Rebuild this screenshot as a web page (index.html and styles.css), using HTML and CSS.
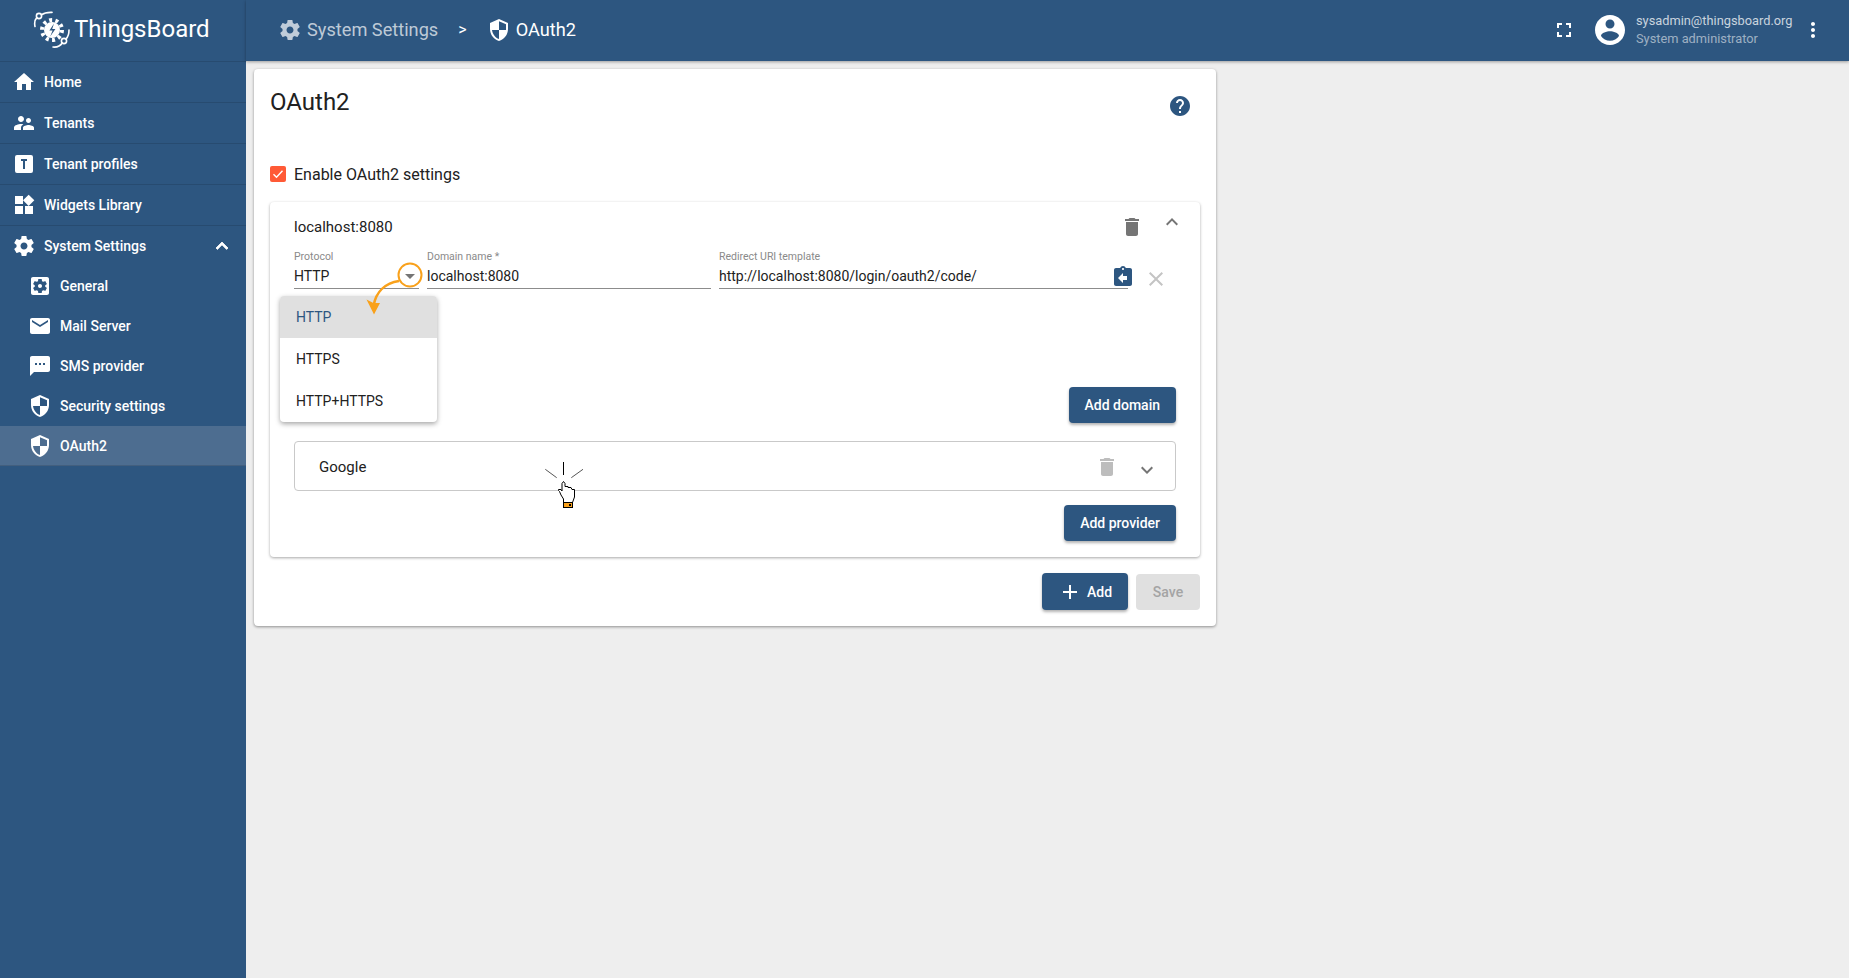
FILE: index.html
```html
<!DOCTYPE html>
<html lang="en">
<head>
<meta charset="utf-8">
<title>OAuth2 - ThingsBoard</title>
<link rel="stylesheet" href="styles.css">
</head>
<body>
<svg class="defs" width="0" height="0" aria-hidden="true">
  <symbol id="i-home" viewBox="0 0 24 24"><path d="M10 20v-6h4v6h5v-8h3L12 3 2 12h3v8z"/></symbol>
  <symbol id="i-tenants" viewBox="0 0 24 24"><path d="M16.5 12c1.38 0 2.49-1.12 2.49-2.5S17.88 7 16.5 7C15.12 7 14 8.12 14 9.5s1.12 2.5 2.5 2.5zM9 11c1.66 0 2.99-1.34 2.99-3S10.66 5 9 5C7.34 5 6 6.34 6 8s1.34 3 3 3zm7.5 3c-1.83 0-5.5.92-5.5 2.75V19h11v-2.25c0-1.83-3.67-2.75-5.5-2.75zM9 13c-2.33 0-7 1.17-7 3.5V19h7v-2.25c0-.85.33-2.34 2.37-3.47C10.5 13.1 9.66 13 9 13z"/></symbol>
  <symbol id="i-tbox" viewBox="0 0 24 24"><path d="M9,7V9H11V17H13V9H15V7H9M5,3H19A2,2 0 0,1 21,5V19A2,2 0 0,1 19,21H5A2,2 0 0,1 3,19V5A2,2 0 0,1 5,3Z"/></symbol>
  <symbol id="i-widgets" viewBox="0 0 24 24"><path d="M13 13v8h8v-8h-8zM3 21h8v-8H3v8zM3 3v8h8V3H3zm13.66-1.31L11 7.34 16.66 13l5.66-5.66-5.66-5.65z"/></symbol>
  <symbol id="i-gear" viewBox="0 0 24 24"><path d="M19.43 12.98c.04-.32.07-.64.07-.98s-.03-.66-.07-.98l2.11-1.65c.19-.15.24-.42.12-.64l-2-3.46c-.12-.22-.39-.3-.61-.22l-2.49 1c-.52-.4-1.08-.73-1.69-.98l-.38-2.65C14.46 2.18 14.25 2 14 2h-4c-.25 0-.46.18-.49.42l-.38 2.65c-.61.25-1.17.59-1.69.98l-2.49-1c-.23-.09-.49 0-.61.22l-2 3.46c-.13.22-.07.49.12.64l2.11 1.65c-.04.32-.07.65-.07.98s.03.66.07.98l-2.11 1.65c-.19.15-.24.42-.12.64l2 3.46c.12.22.39.3.61.22l2.49-1c.52.4 1.08.73 1.69.98l.38 2.65c.03.24.24.42.49.42h4c.25 0 .46-.18.49-.42l.38-2.65c.61-.25 1.17-.59 1.69-.98l2.49 1c.23.09.49 0 .61-.22l2-3.46c.12-.22.07-.49-.12-.64l-2.11-1.65zM12 15.5c-1.93 0-3.5-1.57-3.5-3.5s1.57-3.5 3.5-3.5 3.5 1.57 3.5 3.5-1.57 3.5-3.5 3.5z"/></symbol>
  <symbol id="i-gearbox" viewBox="0 0 24 24"><path d="M12 10c-1.1 0-2 .9-2 2s.9 2 2 2 2-.9 2-2-.9-2-2-2zm7-7H5c-1.11 0-2 .9-2 2v14c0 1.1.89 2 2 2h14c1.11 0 2-.9 2-2V5c0-1.1-.89-2-2-2zm-1.75 9c0 .23-.02.46-.05.68l1.48 1.16c.13.11.17.3.08.45l-1.4 2.42c-.09.15-.27.21-.43.15l-1.74-.7c-.36.28-.76.51-1.18.69l-.26 1.85c-.03.17-.18.3-.35.3h-2.8c-.17 0-.32-.13-.35-.29l-.26-1.85c-.43-.18-.82-.41-1.18-.69l-1.74.7c-.16.06-.34 0-.43-.15l-1.4-2.42c-.09-.15-.05-.34.08-.45l1.48-1.16c-.03-.23-.05-.46-.05-.69 0-.23.02-.46.05-.68l-1.48-1.16c-.13-.11-.17-.3-.08-.45l1.4-2.42c.09-.15.27-.21.43-.15l1.74.7c.36-.28.76-.51 1.18-.69l.26-1.85c.03-.17.18-.3.35-.3h2.8c.17 0 .32.13.35.29l.26 1.85c.43.18.82.41 1.18.69l1.74-.7c.16-.06.34 0 .43.15l1.4 2.42c.09.15.05.34-.08.45l-1.48 1.16c.03.23.05.46.05.69z"/></symbol>
  <symbol id="i-mail" viewBox="0 0 24 24"><path d="M20 4H4c-1.1 0-1.99.9-1.99 2L2 18c0 1.1.9 2 2 2h16c1.1 0 2-.9 2-2V6c0-1.1-.9-2-2-2zm0 4l-8 5-8-5V6l8 5 8-5v2z"/></symbol>
  <symbol id="i-sms" viewBox="0 0 24 24"><path d="M20 2H4c-1.1 0-1.99.9-1.99 2L2 22l4-4h14c1.1 0 2-.9 2-2V4c0-1.1-.9-2-2-2zM9 11H7V9h2v2zm4 0h-2V9h2v2zm4 0h-2V9h2v2z"/></symbol>
  <symbol id="i-shield" viewBox="0 0 24 24"><path transform="matrix(-1 0 0 1 24 0)" d="M12 1L3 5v6c0 5.55 3.84 10.74 9 12 5.16-1.26 9-6.45 9-12V5l-9-4zm0 10.99h7c-.53 4.12-3.28 7.79-7 8.94V12H5V6.3l7-3.11v8.8z"/></symbol>
  <symbol id="i-less" viewBox="0 0 24 24"><path d="M12 8l-6 6 1.41 1.41L12 10.83l4.59 4.58L18 14z"/></symbol>
  <symbol id="i-more" viewBox="0 0 24 24"><path d="M16.59 8.59L12 13.17 7.41 8.59 6 10l6 6 6-6z"/></symbol>
  <symbol id="i-delete" viewBox="0 0 24 24"><path d="M6 19c0 1.1.9 2 2 2h8c1.1 0 2-.9 2-2V7H6v12zM19 4h-3.5l-1-1h-5l-1 1H5v2h14V4z"/></symbol>
  <symbol id="i-help" viewBox="0 0 24 24"><path d="M12 2C6.48 2 2 6.48 2 12s4.48 10 10 10 10-4.48 10-10S17.52 2 12 2zm1 17h-2v-2h2v2zm2.07-7.75l-.9.92C13.45 12.9 13 13.5 13 15h-2v-.5c0-1.1.45-2.1 1.17-2.83l1.24-1.26c.37-.36.59-.86.59-1.41 0-1.1-.9-2-2-2s-2 .9-2 2H8c0-2.21 1.79-4 4-4s4 1.79 4 4c0 .88-.36 1.68-.93 2.25z"/></symbol>
  <symbol id="i-close" viewBox="0 0 24 24"><path d="M19 6.41L17.59 5 12 10.59 6.41 5 5 6.41 10.59 12 5 17.59 6.41 19 12 13.41 17.59 19 19 17.59 13.41 12z"/></symbol>
  <symbol id="i-add" viewBox="0 0 24 24"><path d="M19 13h-6v6h-2v-6H5v-2h6V5h2v6h6v2z"/></symbol>
  <symbol id="i-full" viewBox="0 0 24 24"><path d="M7 14H5v5h5v-2H7v-3zm-2-4h2V7h3V5H5v5zm12 7h-3v2h5v-5h-2v3zM14 5v2h3v3h2V5h-5z"/></symbol>
  <symbol id="i-account" viewBox="0 0 24 24"><path d="M12 2C6.48 2 2 6.48 2 12s4.48 10 10 10 10-4.48 10-10S17.52 2 12 2zm0 3c1.66 0 3 1.34 3 3s-1.34 3-3 3-3-1.34-3-3 1.34-3 3-3zm0 14.2c-2.5 0-4.71-1.28-6-3.22.03-1.99 4-3.08 6-3.08 1.99 0 5.97 1.09 6 3.08-1.29 1.94-3.5 3.22-6 3.22z"/></symbol>
  <symbol id="i-vert" viewBox="0 0 24 24"><path d="M12 8c1.1 0 2-.9 2-2s-.9-2-2-2-2 .9-2 2 .9 2 2 2zm0 2c-1.1 0-2 .9-2 2s.9 2 2 2 2-.9 2-2-.9-2-2-2zm0 6c-1.1 0-2 .9-2 2s.9 2 2 2 2-.9 2-2-.9-2-2-2z"/></symbol>
  <symbol id="i-return" viewBox="0 0 24 24"><path d="M19 3h-4.18C14.4 1.84 13.3 1 12 1c-1.3 0-2.4.84-2.82 2H5c-1.1 0-2 .9-2 2v14c0 1.1.9 2 2 2h14c1.1 0 2-.9 2-2V5c0-1.1-.9-2-2-2zm-7 0c.55 0 1 .45 1 1s-.45 1-1 1-1-.45-1-1 .45-1 1-1zm4 12h-4v3l-5-5 5-5v3h4v4z"/></symbol>
</svg>

<div class="app">
  <aside class="sidebar">
    <div class="brand">
      <svg class="logo" viewBox="0 0 38 38" width="38" height="38">
        <g fill="none" stroke="#fff" stroke-width="1.6" stroke-linecap="round">
          <circle cx="6" cy="5" r="2.6"/>
          <path d="M2 15.5C1.2 11.5 2 8.5 3.8 6.6M8.4 3.8C11 2 14 1.2 19 1.4"/>
          <circle cx="31" cy="30" r="2.6"/>
          <path d="M20 36C24 36.4 27 35.5 29.2 32M33 28C35.4 25.5 36 23 36 19"/>
        </g>
        <circle cx="19" cy="19" r="8" fill="#fff"/>
        <circle cx="19" cy="19" r="10" fill="none" stroke="#fff" stroke-width="4" stroke-dasharray="3 3.28"/>
        <path d="M21 12.5l-4.6 7h3.2l-2.4 6 5.2-7.6h-3.2z" fill="#2d5680"/>
      </svg>
      <span class="brand-name">ThingsBoard</span>
    </div>
    <nav class="nav">
      <a class="nav-item"><svg class="ic"><use href="#i-home"/></svg><span>Home</span></a>
      <a class="nav-item"><svg class="ic"><use href="#i-tenants"/></svg><span>Tenants</span></a>
      <a class="nav-item"><svg class="ic"><use href="#i-tbox"/></svg><span>Tenant profiles</span></a>
      <a class="nav-item"><svg class="ic"><use href="#i-widgets"/></svg><span>Widgets Library</span></a>
      <a class="nav-item nav-open"><svg class="ic"><use href="#i-gear"/></svg><span>System Settings</span><svg class="ic nav-chev"><use href="#i-less"/></svg></a>
      <div class="subnav">
        <a class="sub-item"><svg class="ic"><use href="#i-gearbox"/></svg><span>General</span></a>
        <a class="sub-item"><svg class="ic"><use href="#i-mail"/></svg><span>Mail Server</span></a>
        <a class="sub-item"><svg class="ic"><use href="#i-sms"/></svg><span>SMS provider</span></a>
        <a class="sub-item"><svg class="ic"><use href="#i-shield"/></svg><span>Security settings</span></a>
        <a class="sub-item sub-active"><svg class="ic"><use href="#i-shield"/></svg><span>OAuth2</span></a>
      </div>
    </nav>
  </aside>

  <div class="main">
    <header class="topbar">
      <div class="crumbs">
        <svg class="ic crumb-ic-dim"><use href="#i-gear"/></svg>
        <span class="crumb-dim">System Settings</span>
        <span class="crumb-sep">&gt;</span>
        <svg class="ic crumb-ic"><use href="#i-shield"/></svg>
        <span class="crumb-cur">OAuth2</span>
      </div>
      <div class="top-actions">
        <svg class="ic top-full"><use href="#i-full"/></svg>
        <svg class="avatar"><use href="#i-account"/></svg>
        <div class="user">
          <div class="user-mail">sysadmin@thingsboard.org</div>
          <div class="user-role">System administrator</div>
        </div>
        <svg class="ic top-more"><use href="#i-vert"/></svg>
      </div>
    </header>

    <main class="content">
      <section class="card">
        <div class="card-head">
          <h1 class="title">OAuth2</h1>
          <svg class="ic help"><use href="#i-help"/></svg>
        </div>
        <label class="check-row">
          <span class="checkbox"><svg viewBox="0 0 16 16" width="16" height="16"><path d="M3.5 8.2l3 3 6-6.4" fill="none" stroke="#fff" stroke-width="1.4"/></svg></span>
          <span>Enable OAuth2 settings</span>
        </label>

        <div class="panel">
          <div class="panel-head">
            <span class="panel-title">localhost:8080</span>
            <svg class="ic grey panel-del"><use href="#i-delete"/></svg>
            <svg class="ic grey panel-chev"><use href="#i-less"/></svg>
          </div>
          <div class="fields">
            <div class="field f-protocol">
              <div class="f-label">Protocol</div>
              <div class="f-value">HTTP<span class="caret"></span></div>
            </div>
            <div class="field f-domain">
              <div class="f-label">Domain name *</div>
              <div class="f-value">localhost:8080</div>
            </div>
            <div class="field f-uri">
              <div class="f-label">Redirect URI template</div>
              <div class="f-value">http://localhost:8080/login/oauth2/code/<svg class="ic f-copy"><use href="#i-return"/></svg></div>
            </div>
            <svg class="ic f-close"><use href="#i-close"/></svg>
          </div>
          <div class="btn-row btn-row-domain"><button class="btn">Add domain</button></div>
          <div class="provider">
            <span class="provider-name">Google</span>
            <svg class="ic light provider-del"><use href="#i-delete"/></svg>
            <svg class="ic grey provider-chev"><use href="#i-more"/></svg>
          </div>
          <div class="btn-row btn-row-provider"><button class="btn">Add provider</button></div>
        </div>

        <div class="actions">
          <button class="btn btn-add"><svg class="ic"><use href="#i-add"/></svg>Add</button>
          <button class="btn btn-off">Save</button>
        </div>
      </section>
    </main>
  </div>
</div>

<div class="menu">
  <div class="menu-item menu-sel">HTTP</div>
  <div class="menu-item">HTTPS</div>
  <div class="menu-item">HTTP+HTTPS</div>
</div>

<svg class="note" viewBox="360 258 70 60" width="70" height="60">
  <circle cx="410" cy="275" r="11.5" fill="none" stroke="#f9a11b" stroke-width="2"/>
  <path d="M399 281C386 283 376 291 373.5 306" fill="none" stroke="#f9a11b" stroke-width="2.6"/>
  <path d="M366.5 299.5L373.4 303 380 303L374 314.5z" fill="#f9a11b"/>
</svg>

<svg class="pointer" viewBox="540 458 50 55" width="50" height="55">
  <path d="M563.5 462V475" stroke="#000" fill="none"/>
  <path d="M545.3 469.3L556.7 477.7M583 469.3L571.3 477.7" stroke="#555" fill="none"/>
  <path d="M563.5 502.5V499L561 495L559.5 491.5L558.5 490.5V489.5H561L562 491V483.5L563.5 481.5L565 483.5V486.5H568V487.5H571L572 489.5H574.5V497L572.5 502.5Z" fill="#fff" stroke="#000"/>
  <rect x="563.5" y="502.5" width="9" height="5" fill="#f9a11b" stroke="#000"/>
  <rect x="569" y="504" width="2" height="2" fill="#000"/>
</svg>
</body>
</html>
```

FILE: styles.css
```css
* { box-sizing: border-box; }
html, body { height: 100%; }
body {
  margin: 0;
  background: #eeeeee;
  color: #212121;
  font-family: Roboto, "Helvetica Neue", sans-serif;
  font-size: 14px;
  overflow: hidden;
}
.defs { position: absolute; }
.ic { width: 24px; height: 24px; fill: currentColor; flex: none; display: block; }

.app { display: flex; height: 978px; }

/* Sidebar */
.sidebar { width: 246px; flex: none; background: #2d5680; color: #fff; }
.brand {
  height: 62px;
  display: flex;
  align-items: center;
  padding-left: 33px;
  border-bottom: 1px solid rgba(0, 0, 0, .12);
  box-shadow: 1px 0 0 rgba(0, 0, 0, .08);
}
.logo { flex: none; margin-top: -2px; }
.brand-name { font-size: 24px; margin: -3px 0 0 3px; color: #fff; }
.nav { display: block; }
.nav-item {
  display: flex;
  align-items: center;
  height: 41px;
  padding-left: 12px;
  font-weight: 500;
  border-bottom: 1px solid rgba(0, 0, 0, .12);
}
.nav-item span { margin-left: 8px; }
.nav-open { border-bottom: 0; height: 40px; }
.nav-chev { margin-left: auto; margin-right: 12px; stroke: currentColor; stroke-width: .8px; }
.sub-item {
  display: flex;
  align-items: center;
  height: 40px;
  padding-left: 28px;
  font-weight: 500;
}
.sub-item span { margin-left: 8px; }
.sub-active { background: #4d6d90; border-bottom: 1px solid rgba(0, 0, 0, .12); }

/* Top bar */
.main { flex: 1; min-width: 0; display: flex; flex-direction: column; }
.topbar {
  height: 61px;
  background: #2d5680;
  color: #fff;
  display: flex;
  align-items: center;
  justify-content: space-between;
  padding-left: 32px;
  box-shadow: 0 1px 3px rgba(0, 0, 0, .35);
}
.crumbs { display: flex; align-items: center; font-size: 18.2px; margin-top: -2px; }
.crumb-ic-dim { color: rgba(255, 255, 255, .7); }
.crumb-dim { color: rgba(255, 255, 255, .7); margin-left: 5px; }
.crumb-sep { margin-left: 20px; font-size: 16px; }
.crumb-ic { margin-left: 20px; }
.crumb-cur { margin-left: 5px; }
.top-actions { display: flex; align-items: center; margin-top: -2px; }
.top-full { margin-right: 16px; }
.avatar { width: 36px; height: 36px; fill: #fff; flex: none; }
.user { margin-left: 8px; font-size: 12.8px; line-height: 19px; color: rgba(255, 255, 255, .75); width: 165px; margin-top: -1px; }
.user-role { color: rgba(255, 255, 255, .55); line-height: 18px; }
.top-more { margin-right: 24px; }

/* Content */
.content { padding: 8px; }
.card {
  width: 962px;
  height: 557px;
  background: #fff;
  border-radius: 4px;
  padding: 16px 16px 0;
  box-shadow: 0 1px 3px rgba(0, 0, 0, .4);
}
.card-head { display: flex; justify-content: space-between; height: 65px; }
.title { margin: 1px 0 0; font-size: 24px; font-weight: 400; line-height: 32px; color: #212121; }
.help { color: #2d5680; margin: 9px 8px 0 0; }
.check-row { display: flex; align-items: center; gap: 8px; height: 16px; margin-top: 16px; font-size: 16px; }
.checkbox { width: 16px; height: 16px; background: #ff5a36; border-radius: 2px; display: block; flex: none; }
.checkbox svg { display: block; }

.panel {
  margin-top: 20px;
  height: 355px;
  border-radius: 4px;
  padding: 0 24px;
  box-shadow: 0 1px 3px rgba(0, 0, 0, .35);
}
.panel-head { display: flex; align-items: center; height: 46px; }
.panel-title { font-size: 15px; margin-top: 4px; }
.grey { color: #757575; }
.light { color: #bdbdbd; }
.panel-del { margin-left: auto; margin-right: 16px; margin-top: 4px; }
.panel-chev { margin-right: -8px; margin-top: -6px; }

.fields { display: flex; gap: 8px; height: 42px; margin-top: -1px; }
.field { border-bottom: 1px solid #8c8c8c; height: 42px; }
.f-protocol { width: 125px; }
.f-domain { width: 284px; }
.f-uri { width: 409px; }
.f-label { font-size: 10.5px; line-height: 14px; color: #8a8a8a; margin-top: 3px; }
.f-value { display: flex; align-items: center; justify-content: space-between; font-size: 14px; line-height: 20px; margin-top: 2px; }
.caret { width: 0; height: 0; border: 5px solid transparent; border-top-color: #757575; border-bottom: 0; margin-right: 4px; }
.f-copy { color: #2d5680; margin: -1px -7px -3px 0; }
.f-close { color: #c4c4c4; margin: 20px 0 0 8px; }

.btn-row { display: flex; justify-content: flex-end; }
.btn-row-domain { margin-top: 98px; }
.btn-row-provider { margin-top: 14px; }
.btn {
  height: 36px;
  padding: 0 16px;
  border: 0;
  border-radius: 4px;
  background: #2d5680;
  color: #fff;
  font: 500 14px Roboto, sans-serif;
  box-shadow: 0 2px 3px rgba(0, 0, 0, .3);
}
.provider {
  margin-top: 18px;
  height: 50px;
  border: 1px solid #c9c9c9;
  border-radius: 4px;
  display: flex;
  align-items: center;
  padding: 1px 0 0 24px;
}
.provider-name { font-size: 15px; }
.provider-del { margin-left: auto; margin-right: 16px; }
.provider-chev { margin-right: 16px; margin-top: 6px; }

.actions { display: flex; justify-content: flex-end; gap: 8px; margin-top: 16px; }
.btn-add { display: flex; align-items: center; gap: 5px; height: 37px; width: 86px; padding: 0 0 0 16px; }
.btn-off { background: #e0e0e0; color: #a4a4a4; box-shadow: none; width: 64px; margin-top: 1px; }

/* Overlays */
.menu {
  position: absolute;
  left: 280px;
  top: 296px;
  width: 157px;
  background: #fff;
  border-radius: 4px;
  overflow: hidden;
  box-shadow: 0 2px 5px rgba(0, 0, 0, .35);
}
.menu-item { height: 42px; line-height: 42px; padding-left: 16px; font-size: 14px; }
.menu-sel { background: #e0e0e0; color: #2d5680; }
.note { position: absolute; left: 360px; top: 258px; }
.pointer { position: absolute; left: 540px; top: 458px; }
```
